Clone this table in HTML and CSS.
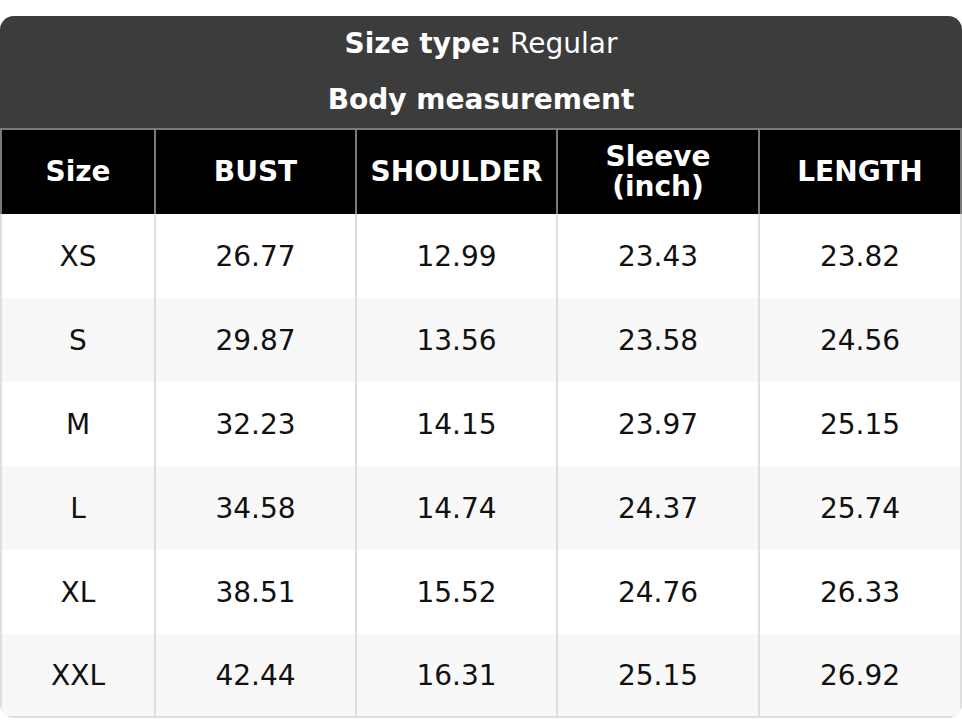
FILE: index.html
```html
<!DOCTYPE html>
<html>
<head>
<meta charset="utf-8">
<link rel="stylesheet" href="styles.css">
</head>
<body>
<div class="card">
  <div class="title">
    <div class="title-line"><b>Size type:</b> Regular</div>
    <div class="title-line"><b>Body measurement</b></div>
  </div>
  <div class="grid head">
    <div class="cell">Size</div>
    <div class="cell">BUST</div>
    <div class="cell">SHOULDER</div>
    <div class="cell">Sleeve<br>(inch)</div>
    <div class="cell">LENGTH</div>
  </div>
  <div class="grid row">
    <div class="cell">XS</div><div class="cell">26.77</div><div class="cell">12.99</div><div class="cell">23.43</div><div class="cell">23.82</div>
  </div>
  <div class="grid row alt">
    <div class="cell">S</div><div class="cell">29.87</div><div class="cell">13.56</div><div class="cell">23.58</div><div class="cell">24.56</div>
  </div>
  <div class="grid row">
    <div class="cell">M</div><div class="cell">32.23</div><div class="cell">14.15</div><div class="cell">23.97</div><div class="cell">25.15</div>
  </div>
  <div class="grid row alt">
    <div class="cell">L</div><div class="cell">34.58</div><div class="cell">14.74</div><div class="cell">24.37</div><div class="cell">25.74</div>
  </div>
  <div class="grid row">
    <div class="cell">XL</div><div class="cell">38.51</div><div class="cell">15.52</div><div class="cell">24.76</div><div class="cell">26.33</div>
  </div>
  <div class="grid row alt last">
    <div class="cell">XXL</div><div class="cell">42.44</div><div class="cell">16.31</div><div class="cell">25.15</div><div class="cell">26.92</div>
  </div>
</div>
</body>
</html>
```
FILE: styles.css
```css
html, body {
  margin: 0;
  padding: 0;
  background: #ffffff;
}
body {
  padding-top: 16px;
  font-family: "DejaVu Sans", Verdana, sans-serif;
}
.card {
  width: 962px;
  border-radius: 14px;
  overflow: hidden;
  background: #dedede;
}
.title {
  background: #3c3c3c;
  color: #ffffff;
  text-align: center;
  font-size: 28px;
}
.title-line {
  height: 56px;
  line-height: 56px;
}
.grid {
  display: grid;
  grid-template-columns: 152px 199px 199px 200px 200px;
  column-gap: 2px;
  padding: 0 2px;
}
.cell {
  display: flex;
  align-items: center;
  justify-content: center;
  text-align: center;
}
.head {
  background: #7a7a7a;
  padding-top: 2px;
}
.head .cell {
  background: #000000;
  color: #ffffff;
  font-weight: bold;
  font-size: 28px;
  line-height: 30px;
  height: 84px;
}
.row .cell {
  background: #ffffff;
  color: #111111;
  font-size: 28px;
  height: 84px;
}
.row.alt .cell {
  background: #f8f8f8;
}
.row.last {
  padding-bottom: 2px;
}
.row.last .cell {
  height: 82px;
}
```
